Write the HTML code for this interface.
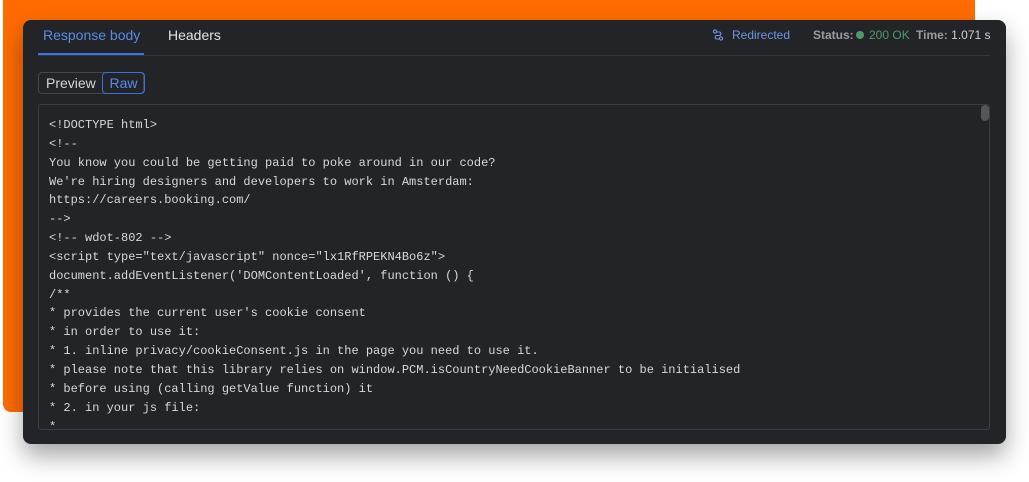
<!DOCTYPE html>
<html><head><style>
body{margin:0;width:1029px;height:482px;background:#fff;position:relative;overflow:hidden;font-family:"Liberation Sans",sans-serif}
.or{position:absolute;left:3px;top:-10px;width:972px;height:422px;background:#ff6b00;border-radius:8px}
.pn{position:absolute;left:23px;top:20px;width:983px;height:424px;background:#232428;border-radius:8px;box-shadow:0 12px 24px rgba(0,0,0,.35)}
.tab{position:absolute;top:7px;font-size:14px}
.ul{position:absolute;left:15px;top:33px;width:106px;height:2px;background:#3d74e0}
.hl{position:absolute;left:15px;top:35px;width:952px;height:1px;background:#36373b}
.seg{position:absolute;left:15px;top:52px;width:106px;height:22px;border:1px solid #45464b;border-radius:4px;box-sizing:border-box;font-size:14px;color:#d6d6d8}
.raw{position:absolute;left:63px;top:-1px;width:43px;height:22px;border:1px solid #3d6fd6;border-radius:4px;box-sizing:border-box;color:#5b8ae6;text-align:center;line-height:20px}
.box{position:absolute;left:15px;top:84px;width:952px;height:326px;border:1px solid #3d3e43;border-radius:3px;box-sizing:border-box;overflow:hidden}
pre{margin:0;position:absolute;left:10px;top:11px;font-family:"Liberation Mono",monospace;font-size:12px;line-height:18.85px;color:#d8d8da}
.sb{position:absolute;right:0;top:0;width:8px;height:16px;background:#55565b;border-radius:4px}
.rt{position:absolute;top:8px;font-size:12px}
</style></head><body>
<div class="or"></div>
<div class="pn">
<div class="tab" style="left:20px;color:#5b8ae6">Response body</div>
<div class="tab" style="left:145px;color:#e4e4e6">Headers</div>
<div class="ul"></div><div class="hl"></div>
<svg style="position:absolute;left:689px;top:9px" width="12" height="12" viewBox="0 0 12 12" fill="none" stroke="#6f95e0" stroke-width="1.1"><circle cx="3" cy="2.5" r="1.6"/><circle cx="9" cy="9.5" r="1.6"/><path d="M4.5 3h3a1.8 1.8 0 0 1 0 3.5h-3a1.8 1.8 0 0 0 0 3.5h3"/></svg>
<div class="rt" style="left:709px;color:#6f95e0">Redirected</div>
<div class="rt" style="left:790px;color:#9a9ba0;font-weight:bold">Status:</div>
<div style="position:absolute;left:833px;top:11px;width:8px;height:8px;border-radius:50%;background:#4f9a6a"></div>
<div class="rt" style="left:846px;color:#4f9a6a">200 OK</div>
<div class="rt" style="left:893px;color:#9a9ba0"><b>Time:</b> <span style="color:#d0d0d3">1.071 s</span></div>
<div class="seg"><span style="position:absolute;left:7px;top:2px">Preview</span><div class="raw">Raw</div></div>
<div class="box"><div class="sb"></div>
<pre>&lt;!DOCTYPE html&gt;
&lt;!--
You know you could be getting paid to poke around in our code?
We're hiring designers and developers to work in Amsterdam:
https://careers.booking.com/
--&gt;
&lt;!-- wdot-802 --&gt;
&lt;script type="text/javascript" nonce="lx1RfRPEKN4Bo6z"&gt;
document.addEventListener('DOMContentLoaded', function () {
/**
* provides the current user's cookie consent
* in order to use it:
* 1. inline privacy/cookieConsent.js in the page you need to use it.
* please note that this library relies on window.PCM.isCountryNeedCookieBanner to be initialised
* before using (calling getValue function) it
* 2. in your js file:
*</pre></div>
</div>
</body></html>
